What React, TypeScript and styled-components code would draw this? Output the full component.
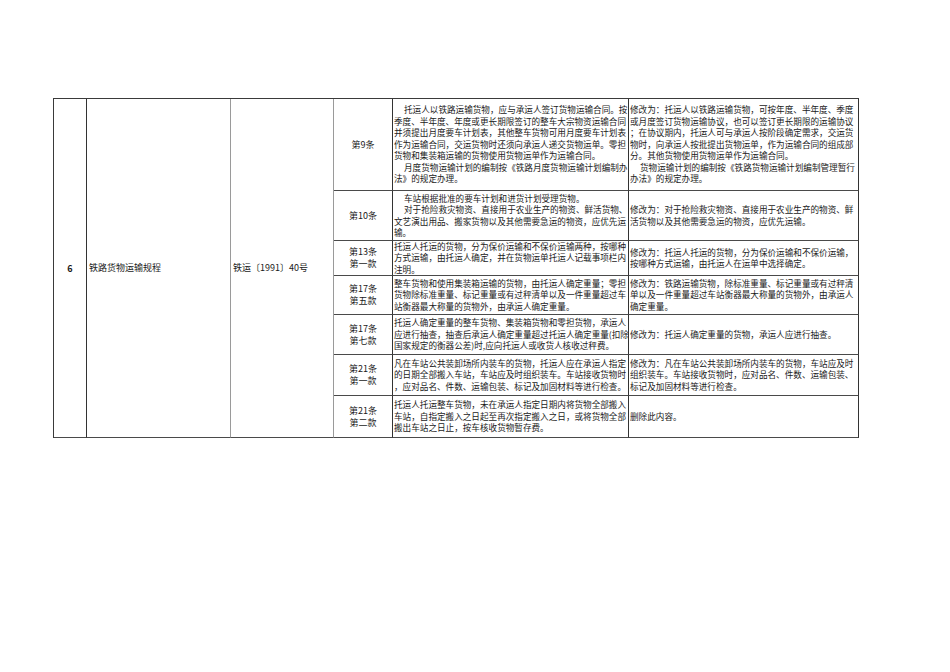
import React from "react";
import styled, { createGlobalStyle } from "styled-components";

const GlobalStyle = createGlobalStyle`
  html, body {
    margin: 0;
    padding: 0;
    background: #ffffff;
  }
  body {
    font-family: "Noto Sans CJK SC", "Noto Sans", sans-serif;
    color: #1a1a1a;
  }
`;

type Para = { indent?: boolean; lines: string[] };

type Clause = {
  no: string[];
  height: number;
  original: Para[];
  revised: Para[];
};

const clauses: Clause[] = [
  {
    no: ["第9条"],
    height: 92,
    original: [
      {
        indent: true,
        lines: [
          "托运人以铁路运输货物，应与承运人签订货物运输合同。按",
          "季度、半年度、年度或更长期限签订的整车大宗物资运输合同",
          "并须提出月度要车计划表，其他整车货物可用月度要车计划表",
          "作为运输合同，交运货物时还须向承运人递交货物运单。零担",
          "货物和集装箱运输的货物使用货物运单作为运输合同。",
        ],
      },
      {
        indent: true,
        lines: ["月度货物运输计划的编制按《铁路月度货物运输计划编制办", "法》的规定办理。"],
      },
    ],
    revised: [
      {
        lines: [
          "修改为：托运人以铁路运输货物，可按年度、半年度、季度",
          "或月度签订货物运输协议，也可以签订更长期限的运输协议",
          "；在协议期内，托运人可与承运人按阶段确定需求，交运货",
          "物时，向承运人按批提出货物运单，作为运输合同的组成部",
          "分。其他货物使用货物运单作为运输合同。",
        ],
      },
      {
        indent: true,
        lines: ["货物运输计划的编制按《铁路货物运输计划编制管理暂行", "办法》的规定办理。"],
      },
    ],
  },
  {
    no: ["第10条"],
    height: 50,
    original: [
      { indent: true, lines: ["车站根据批准的要车计划和进货计划受理货物。"] },
      {
        indent: true,
        lines: ["对于抢险救灾物资、直接用于农业生产的物资、鲜活货物、"],
      },
      { lines: ["文艺演出用品、搬家货物以及其他需要急运的物资，应优先运", "输。"] },
    ],
    revised: [
      {
        lines: [
          "修改为：对于抢险救灾物资、直接用于农业生产的物资、鲜",
          "活货物以及其他需要急运的物资，应优先运输。",
        ],
      },
    ],
  },
  {
    no: ["第13条", "第一款"],
    height: 35,
    original: [
      {
        lines: [
          "托运人托运的货物，分为保价运输和不保价运输两种，按哪种",
          "方式运输，由托运人确定，并在货物运单托运人记载事项栏内",
          "注明。",
        ],
      },
    ],
    revised: [
      {
        lines: [
          "修改为：托运人托运的货物，分为保价运输和不保价运输，",
          "按哪种方式运输，由托运人在运单中选择确定。",
        ],
      },
    ],
  },
  {
    no: ["第17条", "第五款"],
    height: 39,
    original: [
      {
        lines: [
          "整车货物和使用集装箱运输的货物，由托运人确定重量；零担",
          "货物除标准重量、标记重量或有过秤清单以及一件重量超过车",
          "站衡器最大称量的货物外，由承运人确定重量。",
        ],
      },
    ],
    revised: [
      {
        lines: [
          "修改为：铁路运输货物，除标准重量、标记重量或有过秤清",
          "单以及一件重量超过车站衡器最大称量的货物外，由承运人",
          "确定重量。",
        ],
      },
    ],
  },
  {
    no: ["第17条", "第七款"],
    height: 40,
    original: [
      {
        lines: [
          "托运人确定重量的整车货物、集装箱货物和零担货物，承运人",
          "应进行抽查，抽查后承运人确定重量超过托运人确定重量(扣除",
          "国家规定的衡器公差)时,应向托运人或收货人核收过秤费。",
        ],
      },
    ],
    revised: [{ lines: ["修改为：托运人确定重量的货物，承运人应进行抽查。"] }],
  },
  {
    no: ["第21条", "第一款"],
    height: 41,
    original: [
      {
        lines: [
          "凡在车站公共装卸场所内装车的货物，托运人应在承运人指定",
          "的日期全部搬入车站，车站应及时组织装车。车站接收货物时",
          "，应对品名、件数、运输包装、标记及加固材料等进行检查。",
        ],
      },
    ],
    revised: [
      {
        lines: [
          "修改为：凡在车站公共装卸场所内装车的货物，车站应及时",
          "组织装车。车站接收货物时，应对品名、件数、运输包装、",
          "标记及加固材料等进行检查。",
        ],
      },
    ],
  },
  {
    no: ["第21条", "第二款"],
    height: 42,
    original: [
      {
        lines: [
          "托运人托运整车货物，未在承运人指定日期内将货物全部搬入",
          "车站，自指定搬入之日起至再次指定搬入之日，或将货物全部",
          "搬出车站之日止，按车核收货物暂存费。",
        ],
      },
    ],
    revised: [{ lines: ["删除此内容。"] }],
  },
];

const Page = styled.div`
  padding: 98px 0 0 53px;
  min-height: 672px;
  box-sizing: border-box;
`;

const Sheet = styled.div<{ $rows: string }>`
  display: grid;
  grid-template-columns: 33px 144px 103px 59px 236px 230px;
  grid-template-rows: ${(p) => p.$rows};
  width: max-content;
  border-top: 1px solid #3a3a3a;
  border-left: 1px solid #3a3a3a;
`;

const Cell = styled.div<{
  $span?: number;
  $align?: "left" | "center";
  $soft?: boolean;
  $first?: boolean;
}>`
  position: relative;
  box-sizing: border-box;
  grid-row: ${(p) => (p.$span ? `span ${p.$span}` : "auto")};
  display: flex;
  flex-direction: column;
  justify-content: center;
  align-items: ${(p) => (p.$align === "center" ? "center" : "flex-start")};
  padding: 0 1px;
  border-right: 1px solid ${(p) => (p.$soft ? "#9a9a9a" : "#333333")};
  border-bottom: 1px solid #4a4a4a;
  font-size: 8.6px;
  line-height: 11.5px;
  overflow: hidden;

  &::before {
    content: ${(p) => (p.$first ? "''" : "none")};
    position: absolute;
    right: -1px;
    top: -3px;
    width: 1px;
    height: 3px;
    background: ${(p) => (p.$soft ? "#9a9a9a" : "#333333")};
  }
`;

const Serial = styled.span`
  width: 100%;
  text-align: center;
  font-size: 9px;
  font-weight: 700;
  margin-top: 1px;
`;

const Title = styled.span`
  font-size: 9px;
  padding-left: 1px;
`;

const ClauseNo = styled.span`
  font-size: 9px;
  line-height: 12px;
  text-align: center;
`;

const Line = styled.span<{ $indent?: boolean }>`
  display: block;
  white-space: nowrap;
  padding-left: ${(p) => (p.$indent ? "10px" : "0")};
`;

const Tick = styled.span`
  position: absolute;
  left: -1px;
  top: -3px;
  width: 1px;
  height: 3px;
  background: #333333;
`;

function Paragraphs({ paras }: { paras: Para[] }) {
  return (
    <>
      {paras.map((para, i) =>
        para.lines.map((line, j) => (
          <Line key={`${i}-${j}`} $indent={para.indent && j === 0}>
            {line}
          </Line>
        ))
      )}
    </>
  );
}

export default function App() {
  const rows = clauses.map((c) => `${c.height}px`).join(" ");

  return (
    <Page>
      <GlobalStyle />
      <Sheet $rows={rows}>
        <Cell $span={clauses.length} $align="center" $first>
          <Tick />
          <Serial>6</Serial>
        </Cell>
        <Cell $span={clauses.length} $soft $first>
          <Title>铁路货物运输规程</Title>
        </Cell>
        <Cell $span={clauses.length} $soft $first>
          <Title>铁运〔1991〕40号</Title>
        </Cell>
        {clauses.map((c, i) => (
          <React.Fragment key={c.no.join("")}>
            <Cell $align="center" $first={i === 0}>
              {c.no.map((n) => (
                <ClauseNo key={n}>{n}</ClauseNo>
              ))}
            </Cell>
            <Cell $first={i === 0}>
              <Paragraphs paras={c.original} />
            </Cell>
            <Cell $first={i === 0}>
              <Paragraphs paras={c.revised} />
            </Cell>
          </React.Fragment>
        ))}
      </Sheet>
    </Page>
  );
}
